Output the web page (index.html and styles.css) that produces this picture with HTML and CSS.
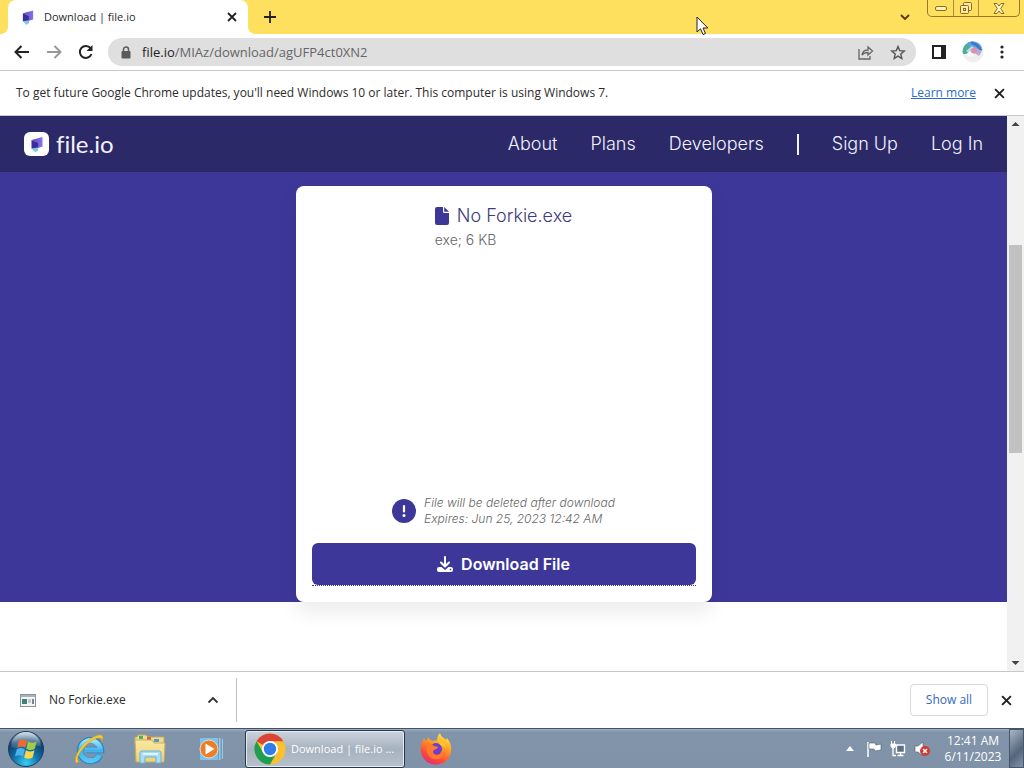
FILE: index.html
```html
<!DOCTYPE html>
<html lang="en">
<head>
<meta charset="utf-8">
<meta name="viewport" content="width=device-width, initial-scale=1">
<title>Download | file.io</title>
<link rel="stylesheet" href="styles.css">
</head>
<body>
<svg class="defs" width="0" height="0" aria-hidden="true">
  <defs>
    <linearGradient id="lg-top" x1="0" y1="0" x2="1" y2="0"><stop offset="0" stop-color="#5a45c4"/><stop offset="1" stop-color="#8a72ec"/></linearGradient>
    <radialGradient id="orb" cx=".5" cy=".9" r=".9"><stop offset="0" stop-color="#35d0f5"/><stop offset=".4" stop-color="#1273ac"/><stop offset=".75" stop-color="#0e3d68"/><stop offset="1" stop-color="#6e9cb8"/></radialGradient>
    <linearGradient id="gloss" x1="0" y1="0" x2="0" y2="1"><stop offset="0" stop-color="#fff" stop-opacity=".7"/><stop offset="1" stop-color="#fff" stop-opacity=".08"/></linearGradient>
    <linearGradient id="ie" x1="0" y1="0" x2="0" y2="1"><stop offset="0" stop-color="#9fe4ff"/><stop offset=".5" stop-color="#3db2ec"/><stop offset="1" stop-color="#58c6f5"/></linearGradient>
    <linearGradient id="fold" x1="0" y1="0" x2="0" y2="1"><stop offset="0" stop-color="#f8eaa2"/><stop offset="1" stop-color="#ecd277"/></linearGradient>
    <linearGradient id="ff" x1=".8" y1="0" x2=".3" y2="1"><stop offset="0" stop-color="#fff04a"/><stop offset=".4" stop-color="#ff9a22"/><stop offset=".75" stop-color="#ff4a3a"/><stop offset="1" stop-color="#e02a78"/></linearGradient>
    <symbol id="fileio" viewBox="0 0 12 16">
      <path d="M.5 3.500 11.500.5v9.500L7 11.500V6z" fill="url(#lg-top)"/>
      <path d="M.5 3.500 7 6v8L.5 12z" fill="#3a2f9c"/>
      <path d="M.5 12 7 11v2.500L4.500 16z" fill="#7fcbe6"/>
    </symbol>
    <symbol id="cross" viewBox="0 0 10 10"><path d="M1 1l8 8M9 1 1 9" fill="none" stroke="currentColor" stroke-width="1.8"/></symbol>
  </defs>
</svg>

<header class="tabstrip">
  <div class="tab">
    <svg class="tab-icon" width="12" height="15"><use href="#fileio"/></svg>
    <span class="tab-title">Download | file.io</span>
    <button class="icon-btn" aria-label="Close tab"><svg width="10" height="10"><use href="#cross"/></svg></button>
  </div>
  <button class="icon-btn new-tab" aria-label="New tab"><svg width="12" height="12" viewBox="0 0 12 12"><path d="M6 0v12M0 6h12" stroke="#222" stroke-width="1.8"/></svg></button>
  <button class="icon-btn tab-search" aria-label="Search tabs"><svg width="10" height="6" viewBox="0 0 10 6"><path d="M1 1l4 4 4-4" fill="none" stroke="#5c3510" stroke-width="1.8"/></svg></button>
  <div class="window-buttons">
    <button aria-label="Minimize"><svg width="12" height="5" viewBox="0 0 12 5"><rect x=".5" y=".5" width="11" height="4" rx="1.5" fill="#fff3bd" stroke="#8d6a25"/></svg></button>
    <button aria-label="Restore"><svg width="14" height="13" viewBox="0 0 14 13"><g fill="#ffeaa0" stroke="#8d6a25"><rect x="4.500" y=".5" width="8" height="8" rx="1"/><rect x="1.500" y="3.500" width="8" height="8" rx="1"/><rect x="4.500" y="6.500" width="2" height="2"/></g></svg></button>
    <button class="wide" aria-label="Close window"><svg width="12" height="11" viewBox="0 0 12 11"><path d="M1 .5h3l2 2.500 2-2.500h3L7.700 5.500 11 10.500H8L6 8l-2 2.500H1l3.300-5z" fill="#fff3bd" stroke="#8d6a25"/></svg></button>
  </div>
  <svg class="cursor" width="13" height="20" viewBox="0 0 13 20" aria-hidden="true"><path d="M1 1v15l3.500-3.200L7 18.500l2.500-1L7 12h4.800z" fill="#fff" stroke="#222"/></svg>
</header>

<div class="toolbar">
  <button class="icon-btn" aria-label="Back"><svg width="16" height="14" viewBox="0 0 16 14"><path d="M7.500 1 1.500 7l6 6M1.500 7H15" fill="none" stroke="#222" stroke-width="2"/></svg></button>
  <button class="icon-btn" aria-label="Forward"><svg width="16" height="14" viewBox="0 0 16 14"><path d="M8.500 1l6 6-6 6M14.500 7H1" fill="none" stroke="#999" stroke-width="2"/></svg></button>
  <button class="icon-btn" aria-label="Reload"><svg width="16" height="16" viewBox="0 0 16 16"><path d="M13.500 10A6 6 0 1 1 12.600 4.200" fill="none" stroke="#222" stroke-width="2"/><path d="M14.500 1v6h-6z" fill="#222"/></svg></button>
  <div class="omnibox">
    <svg width="10" height="13" viewBox="0 0 10 13" aria-hidden="true"><path d="M2.500 6V3.500a2.500 2.500 0 0 1 5 0V6" fill="none" stroke="#5a5a5a" stroke-width="1.500"/><rect x=".5" y="5" width="9" height="7.500" rx="1" fill="#5a5a5a"/></svg>
    <span class="url"><b>file.io</b>/MIAz/download/agUFP4ct0XN2</span>
    <button class="icon-btn" aria-label="Share"><svg width="16" height="15" viewBox="0 0 16 15"><g fill="none" stroke="#666" stroke-width="1.300"><path d="M1 4v10h11v-3"/><path d="M4 10c.5-3.500 2.500-5 6-5V2l4.500 4-4.500 4V7.500C7.500 7.500 5.500 8 4 10z"/></g></svg></button>
    <button class="icon-btn" aria-label="Bookmark"><svg width="16" height="15" viewBox="0 0 16 15"><path d="M8 1.500l1.700 4.100 4.600.4-3.500 3 1 4.500L8 11.100l-3.800 2.400 1-4.500L1.700 6l4.600-.4z" fill="none" stroke="#555" stroke-width="1.400"/></svg></button>
  </div>
  <button class="icon-btn" aria-label="Side panel"><svg width="14" height="14" viewBox="0 0 14 14"><path d="M1 1h12v12H1z" fill="none" stroke="#222" stroke-width="2"/><path d="M9 0h5v14H9z" fill="#222"/></svg></button>
  <button class="icon-btn" aria-label="Profile"><svg width="22" height="22" viewBox="0 0 22 22"><circle cx="11" cy="11" r="10.500" fill="#eeefee"/><path d="M1 13A10 10 0 0 1 7 1l4 4-4 8z" fill="#4fae98"/><path d="M6 1.500a10 10 0 0 1 14 5.500l-5 3-8-4z" fill="#5fa1dd"/><path d="M9 .7c5 0 9 4 11.500 8.300L18 10c-2-4-5-6-9-7z" fill="#3779c6"/><path d="M4 10l6-5 5 4-5 5z" fill="#b8dbf0"/><path d="M9 8l4-2 4 3-1 4-7-1z" fill="#d995a7"/><path d="M3 14l5-4 4 4-3 2z" fill="#f7f8fb"/><path d="M15 8l5 2-3 5-3-2z" fill="#b9aad6"/></svg></button>
  <button class="icon-btn" aria-label="Menu"><svg width="4" height="14" viewBox="0 0 4 14"><g fill="#222"><circle cx="2" cy="2" r="1.600"/><circle cx="2" cy="7" r="1.600"/><circle cx="2" cy="12" r="1.600"/></g></svg></button>
</div>

<div class="infobar">
  <span class="info-text">To get future Google Chrome updates, you'll need Windows 10 or later. This computer is using Windows 7.</span>
  <a href="#">Learn more</a>
  <button class="icon-btn" aria-label="Dismiss"><svg width="11" height="11"><use href="#cross"/></svg></button>
</div>

<div class="viewport">
  <div class="page">
    <nav class="site-nav">
      <a class="brand" href="#">
        <span class="brand-mark"><svg width="12" height="17"><use href="#fileio"/></svg></span>
        <span class="brand-name">file.io</span>
      </a>
      <a href="#">About</a>
      <a href="#">Plans</a>
      <a href="#">Developers</a>
      <span class="divider"></span>
      <a href="#">Sign Up</a>
      <a href="#">Log In</a>
    </nav>
    <main class="hero">
      <section class="card">
        <div class="file">
          <h1><svg width="14" height="18" viewBox="0 0 14 18" aria-hidden="true"><path d="M2 0h6v4.500A1.500 1.500 0 0 0 9.500 6H14v10a2 2 0 0 1-2 2H2a2 2 0 0 1-2-2V2a2 2 0 0 1 2-2z" fill="#3d3799"/><path d="M9.200 0 14 4.800H9.200z" fill="#3d3799"/></svg>No Forkie.exe</h1>
          <p>exe; 6 KB</p>
        </div>
        <div class="notice">
          <svg width="24" height="24" viewBox="0 0 24 24" aria-hidden="true"><circle cx="12" cy="12" r="12" fill="#3d3799"/><path d="M12 7v5.500" stroke="#fff" stroke-width="2.200" stroke-linecap="round"/><circle cx="12" cy="16.500" r="1.500" fill="#fff"/></svg>
          <p>File will be deleted after download<br>Expires: Jun 25, 2023 12:42 AM</p>
        </div>
        <div class="action">
          <button class="download"><svg width="16" height="17" viewBox="0 0 16 17" aria-hidden="true"><path d="M8 1v9M4 6.500l4 4 4-4" fill="none" stroke="#fff" stroke-width="2" stroke-linecap="round" stroke-linejoin="round"/><path d="M2 11h2.500L8 14l3.500-3H14a2 2 0 0 1 2 2v1a2 2 0 0 1-2 2H2a2 2 0 0 1-2-2v-1a2 2 0 0 1 2-2z" fill="#fff"/><circle cx="13.500" cy="13.500" r=".8" fill="#3d3799"/></svg>Download File</button>
        </div>
      </section>
    </main>
  </div>
  <div class="scrollbar" aria-hidden="true">
    <svg width="17" height="17" viewBox="0 0 17 17"><path d="M8.500 6l4 4h-8z" fill="#444"/></svg>
    <div class="track"><div class="thumb"></div></div>
    <svg width="17" height="17" viewBox="0 0 17 17"><path d="M8.500 11l4-4h-8z" fill="#444"/></svg>
  </div>
</div>

<div class="shelf">
  <button class="shelf-item">
    <svg width="16" height="13" viewBox="0 0 16 13" aria-hidden="true"><rect x=".5" y=".5" width="15" height="12" fill="#f2f4f5" stroke="#8a9398"/><path d="M1 1h14v2H1z" fill="#a9b3ba"/><path d="M2 5h5v5H2z" fill="#3d8277"/><path d="M8 6h3M8 8h3" stroke="#98a1a6"/><path d="M12 5h2v5h-2z" fill="#77858c"/></svg>
    <span>No Forkie.exe</span>
    <svg width="12" height="8" viewBox="0 0 12 8" aria-hidden="true"><path d="M1.500 6.500 6 2l4.500 4.500" fill="none" stroke="#333" stroke-width="1.800"/></svg>
  </button>
  <button class="show-all">Show all</button>
  <button class="icon-btn" aria-label="Close downloads"><svg width="11" height="11"><use href="#cross"/></svg></button>
</div>

<footer class="taskbar">
  <button class="start" aria-label="Start"><svg width="36" height="36" viewBox="0 0 36 36"><circle cx="18" cy="18" r="17.500" fill="url(#orb)" stroke="#233e57"/><path d="M3 16A15 15 0 0 1 33 16C24 11 12 20 3 16z" fill="url(#gloss)"/><path d="M11 9.500c3-1.500 5.500-1.500 8 .3L17.200 17c-2.500-1.800-5-1.800-8-.3z" fill="#ee6a30"/><path d="M20.200 10.500c3 1.800 5.500 1.600 8.500 0L26.800 17.800c-3 1.600-5.500 1.600-8.500 0z" fill="#a0cc45"/><path d="M8.800 18.200c3-1.600 5.500-1.500 8 .2L15 25.600c-2.500-1.700-5-1.700-8-.2z" fill="#4fb0ee"/><path d="M18 19.200c3 1.700 5.500 1.600 8.500 0L24.600 26.400c-3 1.700-5.500 1.700-8.500 0z" fill="#fbd54c"/></svg></button>
  <button class="app" aria-label="Internet Explorer"><svg width="34" height="34" viewBox="0 0 34 34"><path d="M28 23A10.500 10.500 0 1 1 29 18H14" fill="none" stroke="#2a86bd" stroke-width="6.500"/><path d="M27.500 23A10 10 0 1 1 28.500 18H13" fill="none" stroke="url(#ie)" stroke-width="5"/><path d="M7 30C2 33 2 26 7 18 13 9 24 2 29 3c3 1 2 5 0 8 1-3 1-5-1-5C23 5 14 12 9 19c-4 6-4 9-2 11z" fill="#f7ca38" stroke="#c99819" stroke-width=".5"/></svg></button>
  <button class="app" aria-label="File Explorer"><svg width="34" height="32" viewBox="0 0 34 32"><path d="M2 4h2l1-2h8l2 2h16v7H2z" fill="#efdb8f" stroke="#c3a95a"/><path d="M6 3h4v3H6z" fill="#4eaf65"/><path d="M14 4h4v3h-4z" fill="#db6740"/><path d="M21 6h5v3h-5z" fill="#5b93d3"/><path d="M2 7h17l2 3h11l-1 19H3z" fill="url(#fold)" stroke="#c9ae61"/><path d="M7 30V20q0-2 2-2h17q2 0 2 2v10h-5v-6H12v6z" fill="#a9dcf5" stroke="#6bb0d9"/><path d="M10 20h15v2H10z" fill="#dff4fd"/></svg></button>
  <button class="app" aria-label="Media Player"><svg width="26" height="24" viewBox="0 0 26 24"><path d="M2 1h18v22H2z" fill="#7fc2e8"/><path d="M21 1h1.500v22H21zM24 2h1v20h-1z" fill="#8ed0f2"/><circle cx="11" cy="12" r="9" fill="#ef7d23" stroke="#d8dce0" stroke-width="1"/><path d="M7.500 6.500v11l9-5.500z" fill="#fff"/></svg></button>
  <button class="running"><svg width="32" height="32" viewBox="0 0 32 32" aria-hidden="true"><circle cx="16" cy="16" r="15.500" fill="#fbc02d"/><path d="M16 16 2.600 8.200A15.500 15.500 0 0 1 29.400 8.200H16z" fill="#db4437"/><path d="M2.600 8.200 9.300 20 16 23.700l6.700-3.900L16 31.500A15.500 15.500 0 0 1 2.600 8.200z" fill="#1e9e54"/><circle cx="16" cy="16" r="8" fill="#fff"/><circle cx="16" cy="16" r="6.200" fill="#2f7de9"/></svg><span>Download | file.io ...</span></button>
  <button class="app" aria-label="Firefox"><svg width="32" height="32" viewBox="0 0 32 32"><path d="M17 7c0-3 1-5 3-7 1 4 3 4 6 7l1-2c3 4 5 8 4 14a15.200 15.200 0 0 1-30 0C0 13 2 9 4 5l2 3 3-4c0 3 2 3 4 4z" fill="url(#ff)"/><circle cx="16" cy="16" r="6" fill="#6b3fd0"/><path d="M7 12c3-2 5-1 7 1l4 1c-1 3-5 2-5 5 1 4 7 4 10 0 1 6-5 8-9 7-5-1-9-7-7-14z" fill="#ff7a2b"/><path d="M17 7c5 0 9 4 9 9-2-3-4-4-6-4 0-2-1-3-3-5z" fill="#ffc629"/></svg></button>
  <div class="tray">
    <svg width="8" height="6" viewBox="0 0 8 6"><path d="M4 0l4 5H0z" fill="#fff"/></svg>
    <svg width="16" height="16" viewBox="0 0 16 16"><path d="M2 1v15" stroke="#fff" stroke-width="1.500"/><path d="M3 2h6l1 2 5-1v6l-6 1-1-2H3z" fill="#fff" stroke="#4c5d72" stroke-width=".6"/></svg>
    <svg width="16" height="16" viewBox="0 0 16 16"><path d="M6.500 4h8v7.500h-8z" fill="#5d6f86" stroke="#fff" stroke-width="1.400"/><path d="M3 6v8.500h3M7.500 14.500h6M10.500 12v2" fill="none" stroke="#fff" stroke-width="1.300"/><path d="M1 3h4.500v2.500L4 7H2.500L1 5.500zM1.500 0v3M4.500 0v3" fill="#fff" stroke="#fff"/></svg>
    <svg width="17" height="16" viewBox="0 0 17 16"><path d="M1 5h3l5-4v14l-5-4H1z" fill="#fff" stroke="#4c5d72" stroke-width=".6"/><circle cx="11" cy="10" r="5" fill="#d23934"/><path d="M9 8l4 4M13 8l-4 4" stroke="#fff" stroke-width="1.500"/></svg>
    <div class="clock"><span>12:41 AM</span><span>6/11/2023</span></div>
  </div>
  <button class="peek" aria-label="Show desktop"></button>
</footer>
</body>
</html>
```
FILE: styles.css
```css
* { box-sizing: border-box; }
body {
  margin: 0;
  height: 100vh;
  display: flex;
  flex-direction: column;
  overflow: hidden;
  background: #fff;
  color: #2c2c2c;
  font: 12px/16px "Open Sans", "Noto Sans", sans-serif;
}
button { margin: 0; padding: 0; border: 0; background: none; color: inherit; font: inherit; }
svg { display: block; flex: none; }
.defs { position: absolute; }
.icon-btn { display: flex; align-items: center; justify-content: center; flex: none; color: #222; }

.tabstrip { position: relative; display: flex; align-items: center; height: 34px; padding-left: 8px; background: #ffdf5e; flex: none; }
.tab { position: relative; display: flex; align-items: center; align-self: stretch; width: 240px; padding: 0 11px 0 14px; background: #fff; border-radius: 8px 8px 0 0; }
.tab::before, .tab::after { content: ""; position: absolute; bottom: 0; width: 8px; height: 8px; }
.tab::before { right: 100%; background: radial-gradient(circle at 0 0, transparent 8px, #fff 8px); }
.tab::after { left: 100%; background: radial-gradient(circle at 100% 0, transparent 8px, #fff 8px); }
.tab-title { flex: 1; margin-left: 10px; font-size: 11px; }
.new-tab { margin-left: 16px; }
.tab-search { margin-left: auto; margin-right: 17px; }
.window-buttons { display: flex; align-self: flex-start; height: 17px; margin-right: 4px; border: 1px solid #9a7728; border-top: 0; border-radius: 0 0 5px 5px; }
.window-buttons button { display: flex; align-items: center; justify-content: center; width: 25px; }
.window-buttons button + button { border-left: 1px solid #b18d38; }
.window-buttons .wide { width: 41px; }
.cursor { position: absolute; left: 68%; top: 16px; }

.toolbar { display: flex; align-items: center; gap: 16px; height: 37px; padding: 0 20px 0 14px; border-bottom: 1px solid #c8c8c8; flex: none; }
.omnibox { display: flex; align-items: center; flex: 1; gap: 16px; height: 28px; margin-left: -2px; padding: 0 10px 0 13px; border-radius: 14px; background: #dfdfdf; }
.url { flex: 1; margin-left: -5px; color: #666; font-size: 13px; }
.url b { color: #222; font-weight: 400; }

.infobar { display: flex; align-items: center; height: 45px; padding: 0 19px 0 16px; border-bottom: 1px solid #c6c9d2; flex: none; }
.info-text { flex: 1; }
.infobar a { margin-right: 18px; color: #2b6cc4; }

.viewport { display: flex; flex: 1; min-height: 0; }
.page { flex: 1; font-family: Inter, sans-serif; }
.site-nav { display: flex; align-items: center; gap: 33px; height: 56px; padding: 0 24px; background: #2b2968; }
.site-nav a { color: #f3f2fb; font-size: 18px; line-height: 24px; font-weight: 300; text-decoration: none; }
.site-nav .brand { display: flex; align-items: center; gap: 7px; margin-right: auto; }
.brand-mark { display: flex; align-items: center; justify-content: center; width: 25px; height: 24px; border-radius: 6px; background: #fff; }
.brand-name { font-family: Lato, sans-serif; font-size: 24px; line-height: 28px; font-weight: 400; font-variant-ligatures: none; }
.divider { width: 2px; height: 21px; background: #f3f2fb; }
.hero { padding-top: 14px; background: #3d3799; }
.card { display: flex; flex-direction: column; align-items: center; width: 416px; max-width: 100%; min-height: 416px; margin: 0 auto; padding: 16px; border-radius: 8px; background: #fff; box-shadow: 0 10px 20px rgba(0, 0, 0, .08); }
.file { margin-bottom: auto; }
.file h1 { display: flex; align-items: center; gap: 8px; margin: 0; color: #3d3a80; font-size: 18px; line-height: 28px; font-weight: 300; }
.file p { margin: 0; color: #666; font-size: 14px; line-height: 20px; font-weight: 300; }
.notice { display: flex; align-items: center; gap: 8px; margin-bottom: 16px; }
.notice p { margin: 0; color: #666; font-size: 12px; line-height: 16px; font-style: italic; font-weight: 300; }
.action { width: 100%; border-bottom: 1px dotted #3d3799; }
.download { display: flex; align-items: center; justify-content: center; gap: 8px; width: 100%; height: 42px; border-radius: 6px; background: #3d3799; color: #fff; font-size: 16px; font-weight: 600; }

.scrollbar { display: flex; flex-direction: column; width: 17px; background: #f1f1f1; }
.track { flex: 1; padding: 0 2px; }
.thumb { height: 40%; background: #c1c1c1; }
.track::before { content: ""; display: block; height: 21.5%; }

.shelf { display: flex; align-items: center; height: 57px; padding-right: 12px; border-top: 1px solid #c8c8c8; flex: none; }
.shelf-item { display: flex; align-items: center; width: 237px; height: 44px; padding: 0 17px 0 20px; border-right: 1px solid #c0c0c0; text-align: left; }
.shelf-item span { flex: 1; margin-left: 13px; }
.show-all { margin-left: auto; margin-right: 13px; width: 78px; height: 32px; border: 1px solid #d5d7dc; border-radius: 4px; color: #3269be; }

.taskbar { display: flex; align-items: center; height: 40px; padding-left: 8px; border-top: 1px solid #3f5269; background: linear-gradient(#a3b1c2, #8294aa 3px, #8092a8); flex: none; color: #fff; }
.start { width: 50px; }
.app { display: flex; align-items: center; justify-content: center; width: 61px; }
.running { display: flex; align-items: center; gap: 5px; width: 160px; height: 38px; margin-left: 4px; padding: 0 8px; border: 1px solid #27384b; border-radius: 3px; background: linear-gradient(#cbd3dc, #a7b2bf 50%, #b7c1cb); box-shadow: inset 0 0 0 1px #e6ebf0; font-size: 11px; white-space: nowrap; }
.tray { display: flex; align-items: center; gap: 12px; margin-left: auto; }
.tray svg + svg { margin-right: -4px; }
.clock { display: flex; flex-direction: column; align-items: center; width: 64px; margin-left: 2px; }
.peek { width: 15px; align-self: stretch; margin-left: 4px; border: 1px solid #44576d; background: linear-gradient(135deg, #a9b5c3, #54667c 60%, #8494a7); }
```
